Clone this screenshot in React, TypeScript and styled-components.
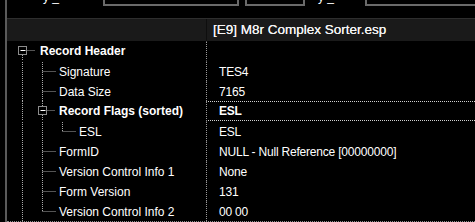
import React from 'react';
import styled, { createGlobalStyle } from 'styled-components';

const GlobalStyle = createGlobalStyle`
  html, body {
    margin: 0;
    background: #000;
  }
  body {
    font-family: "Liberation Sans", Arial, sans-serif;
    color: #fff;
  }
`;

interface TreeItem {
  label: string;
  value: string;
  level: number;
  bold?: boolean;
  expander?: boolean;
  first?: boolean;
  last?: boolean;
  childStub?: boolean;
  ancestors: number[];
  focused?: boolean;
}

const items: TreeItem[] = [
  { label: 'Record Header', value: '', level: 0, bold: true, expander: true, first: true, ancestors: [] },
  { label: 'Signature', value: 'TES4', level: 1, ancestors: [0] },
  { label: 'Data Size', value: '7165', level: 1, ancestors: [0] },
  {
    label: 'Record Flags (sorted)', value: 'ESL', level: 1, bold: true,
    expander: true, childStub: true, ancestors: [0], focused: true,
  },
  { label: 'ESL', value: 'ESL', level: 2, last: true, ancestors: [0, 1] },
  { label: 'FormID', value: 'NULL - Null Reference [00000000]', level: 1, ancestors: [0] },
  { label: 'Version Control Info 1', value: 'None', level: 1, ancestors: [0] },
  { label: 'Form Version', value: '131', level: 1, ancestors: [0] },
  { label: 'Version Control Info 2', value: '00 00', level: 1, last: true, ancestors: [0] },
];

const GUIDE_WIDTH = [33, 52, 72];
const LINE = '#a8a8a8';
const guideX = (level: number) => 15.5 + level * 20;

const Guides = ({ item }: { item: TreeItem }) => {
  const x = guideX(item.level);
  const mid = 9.5;
  return (
    <GuideSvg width={GUIDE_WIDTH[item.level]} height={20}>
      <g stroke={LINE} strokeWidth={1} strokeDasharray="1 1" fill="none">
        {item.ancestors.map((a) => (
          <line key={a} x1={guideX(a)} y1={0} x2={guideX(a)} y2={20} />
        ))}
        {item.expander ? (
          <>
            {!item.first && <line x1={x} y1={0} x2={x} y2={5} />}
            <line x1={x} y1={14} x2={x} y2={20} />
            <line x1={x + 5} y1={mid} x2={x + 12} y2={mid} />
          </>
        ) : (
          <>
            <line x1={x} y1={0} x2={x} y2={item.last ? mid : 20} />
            <line x1={x} y1={mid} x2={x + 13} y2={mid} />
          </>
        )}
        {item.childStub && (
          <line x1={guideX(item.level + 1)} y1={15} x2={guideX(item.level + 1)} y2={20} />
        )}
      </g>
      {item.expander && (
        <>
          <rect x={x - 4} y={5.5} width={8} height={8} stroke="#8c8c8c" fill="#000" />
          <line x1={x - 2} y1={mid} x2={x + 3} y2={mid} stroke="#fff" />
        </>
      )}
    </GuideSvg>
  );
};

const App = () => (
  <>
    <GlobalStyle />
    <Window>
      <Gutter />
      <Main>
        <TopStrip>
          <ClipRow>
            <CutLabel $left={36}>y _</CutLabel>
            <EditBox $left={44} $width={136} />
            <EditBox $left={6} $width={60} />
            <CutLabel $left={13}>y _</CutLabel>
            <EditBox $left={31} $width={130} />
          </ClipRow>
        </TopStrip>
        <Tree>
          <Header>
            <HeaderCell />
            <HeaderCell $divider>[E9] M8r Complex Sorter.esp</HeaderCell>
          </Header>
          {items.map((item) => (
            <Row key={item.label + item.level}>
              <NameCell>
                <Guides item={item} />
                <NameText $bold={item.bold}>{item.label}</NameText>
              </NameCell>
              <ValueCell $focused={item.focused} $bold={item.focused}>
                {item.value}
              </ValueCell>
            </Row>
          ))}
        </Tree>
      </Main>
    </Window>
  </>
);

export default App;

const Window = styled.div`
  display: flex;
  width: 475px;
  height: 222px;
  overflow: hidden;
  background: #000;
`;

const Gutter = styled.div`
  flex: 0 0 2px;
  margin-left: 5px;
  background: #5a5a5a;
`;

const Main = styled.div`
  flex: 1;
  display: flex;
  flex-direction: column;
  min-width: 0;
`;

const TopStrip = styled.div`
  height: 18px;
  flex: 0 0 18px;
`;

const ClipRow = styled.div`
  display: flex;
  align-items: flex-end;
  height: 6px;
  overflow: hidden;
`;

const EditBox = styled.div<{ $left: number; $width: number }>`
  flex: 0 0 ${(p) => p.$width}px;
  margin-left: ${(p) => p.$left}px;
  height: 20px;
  box-sizing: border-box;
  border: 2px solid #6a6a6a;
  background: #000;
`;

const CutLabel = styled.span<{ $left: number }>`
  margin-left: ${(p) => p.$left}px;
  margin-bottom: 3px;
  font-size: 12px;
  line-height: 12px;
  height: 12px;
  white-space: pre;
  color: #fff;
`;

const Tree = styled.div`
  flex: 0 0 203px;
  display: flex;
  flex-direction: column;
  background: #000;
  border-bottom: 1px dotted #8a8a8a;
`;

const Header = styled.div`
  display: grid;
  grid-template-columns: 199px 1fr;
  height: 23px;
  flex: 0 0 23px;
  box-sizing: border-box;
  border-top: 1px solid #2e2e2e;
  background: #1a1a1a;
`;

const HeaderCell = styled.div<{ $divider?: boolean }>`
  border-left: ${(p) => (p.$divider ? '1px solid #0e0e0e' : 'none')};
  padding-left: 6px;
  font-size: 13.5px;
  line-height: 22px;
  color: #f4f4f4;
  white-space: nowrap;
  text-shadow: 0 0 0.4px #fff;
`;

const Row = styled.div`
  display: grid;
  grid-template-columns: 199px 1fr;
  height: 20px;
  flex: 0 0 20px;
`;

const NameCell = styled.div`
  display: flex;
  align-items: center;
  white-space: nowrap;
`;

const GuideSvg = styled.svg`
  flex: 0 0 auto;
  display: block;
`;

const NameText = styled.span<{ $bold?: boolean }>`
  font-size: 12px;
  font-weight: ${(p) => (p.$bold ? 700 : 400)};
  color: #fff;
`;

const ValueCell = styled.div<{ $focused?: boolean; $bold?: boolean }>`
  box-sizing: border-box;
  border-left: 1px dotted #9a9a9a;
  border-top: 1px dotted ${(p) => (p.$focused ? '#d0d0d0' : 'transparent')};
  border-bottom: 1px dotted ${(p) => (p.$focused ? '#d0d0d0' : 'transparent')};
  padding-left: 12px;
  font-size: 12px;
  letter-spacing: -0.2px;
  line-height: ${(p) => (p.$focused ? '18px' : '20px')};
  font-weight: ${(p) => (p.$bold ? 700 : 400)};
  white-space: nowrap;
  color: #fff;
`;
